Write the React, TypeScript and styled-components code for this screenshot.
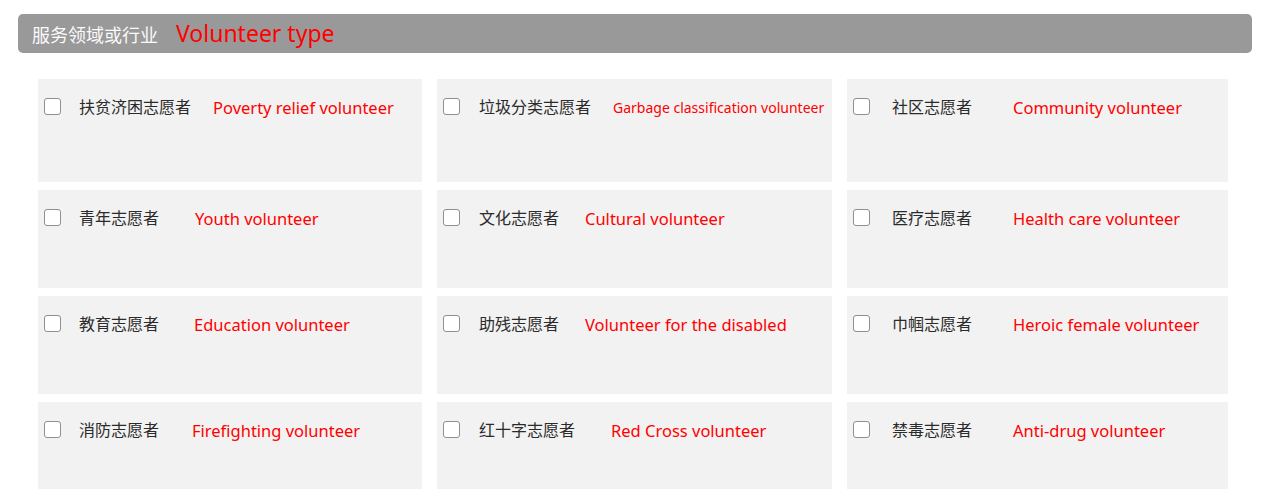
import React from "react";
import styled, { createGlobalStyle } from "styled-components";

const GlobalStyle = createGlobalStyle`
  html, body { margin: 0; padding: 0; background: #ffffff; }
  body { font-family: "Noto Sans", "Noto Sans CJK SC", sans-serif; }
`;

const Page = styled.div`
  width: 1266px;
  height: 501px;
  padding-top: 14px;
  box-sizing: border-box;
  background: #ffffff;
`;

const TitleBar = styled.div`
  margin-left: 18px;
  width: 1234px;
  height: 39px;
  box-sizing: border-box;
  padding-left: 14px;
  background: #999999;
  border-radius: 5px;
  display: flex;
  align-items: center;
  gap: 18px;
`;

const TitleZh = styled.span`
  font-family: "Noto Sans CJK SC", sans-serif;
  font-size: 18px;
  color: #fafafa;
  line-height: 1;
`;

const TitleEn = styled.span`
  font-family: "Noto Sans", sans-serif;
  font-size: 23px;
  color: #ff0000;
  line-height: 1;
`;

const Grid = styled.div`
  margin: 26px 0 0 38px;
  display: grid;
  grid-template-columns: 384px 395px 381px;
  grid-template-rows: 103px 98px 98px 87px;
  column-gap: 15px;
  row-gap: 8px;
`;

const Card = styled.label`
  background: #f2f2f2;
  padding: 19px 0 0 6px;
  box-sizing: border-box;
  display: flex;
  align-items: flex-start;
`;

const Line = styled.div`
  height: 17px;
  display: flex;
  align-items: center;
  white-space: nowrap;
`;

const Box = styled.span`
  width: 17px;
  height: 17px;
  box-sizing: border-box;
  border: 1px solid #8f8f8f;
  border-radius: 3px;
  background: #ffffff;
  flex: none;
`;

const ZhLabel = styled.span<{ $lead: number; $w: number }>`
  font-family: "Noto Sans CJK SC", sans-serif;
  font-size: 16px;
  color: #2b2b2b;
  margin-left: ${(p) => p.$lead}px;
  width: ${(p) => p.$w}px;
  flex: none;
  line-height: 17px;
`;

const EnLabel = styled.span<{ $size: number }>`
  font-family: "Noto Sans", sans-serif;
  font-size: ${(p) => p.$size}px;
  color: #ff0000;
  line-height: 17px;
  padding-top: 1px;
`;

type Item = { zh: string; en: string; w: number; lead: number; size?: number };

const items: Item[] = [
  { zh: "扶贫济困志愿者", en: "Poverty relief volunteer", w: 134, lead: 18 },
  { zh: "垃圾分类志愿者", en: "Garbage classification volunteer", w: 134, lead: 19, size: 14 },
  { zh: "社区志愿者", en: "Community volunteer", w: 121, lead: 22 },
  { zh: "青年志愿者", en: "Youth volunteer", w: 116, lead: 18 },
  { zh: "文化志愿者", en: "Cultural volunteer", w: 106, lead: 19 },
  { zh: "医疗志愿者", en: "Health care volunteer", w: 121, lead: 22 },
  { zh: "教育志愿者", en: "Education volunteer", w: 115, lead: 18 },
  { zh: "助残志愿者", en: "Volunteer for the disabled", w: 106, lead: 19 },
  { zh: "巾帼志愿者", en: "Heroic female volunteer", w: 121, lead: 22 },
  { zh: "消防志愿者", en: "Firefighting volunteer", w: 113, lead: 18 },
  { zh: "红十字志愿者", en: "Red Cross volunteer", w: 132, lead: 19 },
  { zh: "禁毒志愿者", en: "Anti-drug volunteer", w: 121, lead: 22 },
];

export default function App() {
  return (
    <Page>
      <GlobalStyle />
      <TitleBar>
        <TitleZh>服务领域或行业</TitleZh>
        <TitleEn>Volunteer type</TitleEn>
      </TitleBar>
      <Grid>
        {items.map((it) => (
          <Card key={it.zh}>
            <Line>
              <Box />
              <ZhLabel $lead={it.lead} $w={it.w}>
                {it.zh}
              </ZhLabel>
              <EnLabel $size={it.size ?? 16.5}>{it.en}</EnLabel>
            </Line>
          </Card>
        ))}
      </Grid>
    </Page>
  );
}
